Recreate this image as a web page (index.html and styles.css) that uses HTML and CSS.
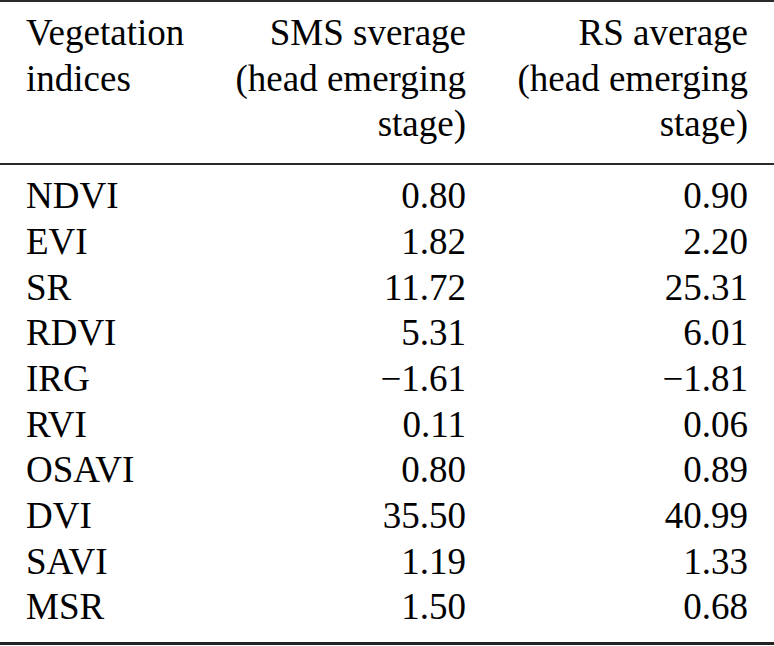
FILE: index.html
```html
<!DOCTYPE html>
<html lang="en">
<head>
<meta charset="utf-8">
<title>Vegetation indices</title>
<link rel="stylesheet" href="styles.css">
</head>
<body>
<table class="vi-table">
  <colgroup>
    <col class="c1">
    <col class="c2">
    <col class="c3">
  </colgroup>
  <thead>
    <tr>
      <th class="name">Vegetation<br>indices</th>
      <th class="num">SMS sverage<br>(head emerging<br>stage)</th>
      <th class="num">RS average<br>(head emerging<br>stage)</th>
    </tr>
  </thead>
  <tbody>
    <tr class="first"><td class="name">NDVI</td><td class="num">0.80</td><td class="num">0.90</td></tr>
    <tr><td class="name">EVI</td><td class="num">1.82</td><td class="num">2.20</td></tr>
    <tr><td class="name">SR</td><td class="num">11.72</td><td class="num">25.31</td></tr>
    <tr><td class="name">RDVI</td><td class="num">5.31</td><td class="num">6.01</td></tr>
    <tr><td class="name">IRG</td><td class="num">&minus;1.61</td><td class="num">&minus;1.81</td></tr>
    <tr><td class="name">RVI</td><td class="num">0.11</td><td class="num">0.06</td></tr>
    <tr><td class="name">OSAVI</td><td class="num">0.80</td><td class="num">0.89</td></tr>
    <tr><td class="name">DVI</td><td class="num">35.50</td><td class="num">40.99</td></tr>
    <tr><td class="name">SAVI</td><td class="num">1.19</td><td class="num">1.33</td></tr>
    <tr class="last"><td class="name">MSR</td><td class="num">1.50</td><td class="num">0.68</td></tr>
  </tbody>
</table>
</body>
</html>
```
FILE: styles.css
```css
html, body {
  margin: 0;
  padding: 0;
  background: #ffffff;
}

.vi-table {
  width: 774px;
  table-layout: fixed;
  border-collapse: collapse;
  font-family: "Liberation Serif", "Times New Roman", serif;
  font-size: 37px;
  line-height: 45.7px;
  color: #000000;
}

.c1 { width: 230px; }
.c2 { width: 262px; }
.c3 { width: 282px; }

.vi-table th,
.vi-table td {
  padding: 0;
  font-weight: normal;
  vertical-align: top;
  white-space: nowrap;
}

.vi-table thead tr {
  border-top: 2px solid #2a2a2a;
  border-bottom: 2px solid #2a2a2a;
}

.vi-table th {
  padding-top: 8px;
  padding-bottom: 16px;
}

.vi-table tbody tr.first td {
  padding-top: 8px;
}

.vi-table tbody tr.last {
  border-bottom: 3px solid #222222;
}

.vi-table tbody tr.last td {
  padding-bottom: 12px;
}

.name {
  text-align: left;
  padding-left: 26px !important;
}

.num {
  text-align: right;
}

.vi-table th.num,
.vi-table td.num {
  padding-right: 26px;
}
```
